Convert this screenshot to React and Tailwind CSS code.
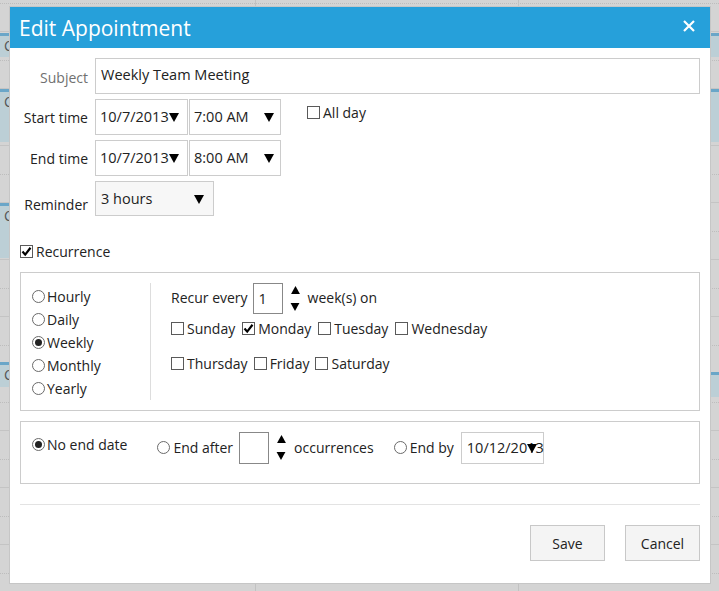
import React from "react";

const solidLines = [31, 88, 145, 202, 259, 316, 373, 430, 487, 544];
const dottedLines = [3, 60, 117, 174, 231, 288, 345, 402, 459, 516, 573];
const leftBlocks = [
  [33, 24],
  [89, 53],
  [203, 55],
  [362, 25],
];
const rightBlocks = [
  [33, 24],
  [89, 53],
  [372, 25],
];

function Tri({ up, w = 10, h = 9 }) {
  return (
    <svg width={w} height={h} viewBox="0 0 10 9" className="block shrink-0">
      <path d={up ? "M5 0L10 9H0Z" : "M0 0H10L5 9Z"} fill="#000" />
    </svg>
  );
}

function Check({ checked }) {
  return (
    <span className="relative inline-block w-[13px] h-[13px] border border-[#5a5a5a] bg-white shrink-0">
      {checked && (
        <svg width="13" height="13" viewBox="0 0 13 13" className="absolute left-[-1px] top-[-1px]">
          <path d="M2.5 6.5L5.2 9.6L10.5 2.8" stroke="#000" strokeWidth="2.2" fill="none" />
        </svg>
      )}
    </span>
  );
}

function Radio({ checked }) {
  return (
    <span className="inline-flex items-center justify-center w-[13px] h-[13px] rounded-full border border-[#6a6a6a] bg-white shrink-0">
      {checked && <span className="w-[7px] h-[7px] rounded-full bg-[#222]" />}
    </span>
  );
}

function CheckItem({ checked, label }) {
  return (
    <span className="inline-flex items-center gap-[3px]">
      <Check checked={checked} />
      <span>{label}</span>
    </span>
  );
}

function RadioItem({ checked, label }) {
  return (
    <span className="inline-flex items-center gap-[2px] h-[23px]">
      <Radio checked={checked} />
      <span>{label}</span>
    </span>
  );
}

function Spinner() {
  return (
    <span className="flex flex-col justify-between h-[27px] py-[1px]">
      <Tri up w={11} h={8} />
      <Tri w={10} h={8} />
    </span>
  );
}

export default function App() {
  return (
    <div
      className="relative w-[719px] h-[591px] overflow-hidden bg-[#d4d4d4] text-[14px] text-[#222]"
      style={{ fontFamily: '"Open Sans", "Noto Sans", sans-serif' }}
    >
      {/* scheduler background */}
      {solidLines.map((y) => (
        <div key={"s" + y} className="absolute left-0 right-0 h-px bg-[#c4c4c4]" style={{ top: y }} />
      ))}
      {dottedLines.map((y) => (
        <div key={"d" + y} className="absolute left-0 right-0 h-0 border-t border-dotted border-[#bdbdbd]" style={{ top: y }} />
      ))}
      <div className="absolute top-0 bottom-0 left-[255px] w-px bg-[#c2c2c2]" />
      <div className="absolute top-0 bottom-0 left-[518px] w-px bg-[#c2c2c2]" />
      {leftBlocks.map(([t, h]) => (
        <div
          key={"l" + t}
          className="absolute left-0 w-[10px] whitespace-nowrap bg-[#bccfd6] border-t-[3px] border-[#6aa6c8] text-[#555] pl-[4px] leading-[20px]"
          style={{ top: t, height: h }}
        >
          C
        </div>
      ))}
      {rightBlocks.map(([t, h]) => (
        <div
          key={"r" + t}
          className="absolute left-[700px] w-[19px] bg-[#bccfd6] border-t-[3px] border-[#6aa6c8]"
          style={{ top: t, height: h }}
        />
      ))}

      {/* dialog */}
      <div className="absolute left-[10px] top-[7px] w-[700px] h-[576px] bg-white ring-1 ring-[#c6c6c6] flex flex-col">
        <div className="h-[41px] bg-[#26a0da] flex items-center justify-between pl-[9px] pr-[15px] text-white">
          <span className="text-[21px] leading-none mt-[1px]">Edit Appointment</span>
          <svg width="12" height="12" viewBox="0 0 12 12" className="mb-[3px]">
            <path d="M1 1L11 11M11 1L1 11" stroke="#fff" strokeWidth="2.2" />
          </svg>
        </div>

        <div className="flex flex-col px-[10px]">
          {/* Subject */}
          <div className="flex items-center mt-[10px] h-[36px]">
            <span className="w-[68px] text-right text-[#707070] leading-[40px] h-[36px]">Subject</span>
            <div className="ml-[7px] flex-1 h-[36px] border border-[#cccccc] flex items-center pl-[5px] pb-[3px] text-[14.5px]">
              Weekly Team Meeting
            </div>
          </div>

          {/* Start time */}
          <div className="flex items-start mt-[5px] h-[36px]">
            <span className="w-[68px] text-right leading-[38px] h-[36px]">Start time</span>
            <div className="ml-[7px] w-[93px] h-[36px] border border-[#cccccc] flex items-center pl-[4px] text-[14.5px]">
              <span>10/7/2013</span>
              <Tri />
            </div>
            <div className="ml-[1px] w-[92px] h-[36px] border border-[#cccccc] flex items-center justify-between pl-[4px] pr-[6px] text-[14.5px]">
              <span>7:00 AM</span>
              <Tri />
            </div>
            <span className="ml-[26px] mt-[3px]">
              <CheckItem label="All day" />
            </span>
          </div>

          {/* End time */}
          <div className="flex items-start mt-[5px] h-[36px]">
            <span className="w-[68px] text-right leading-[38px] h-[36px]">End time</span>
            <div className="ml-[7px] w-[93px] h-[36px] border border-[#cccccc] flex items-center pl-[4px] text-[14.5px]">
              <span>10/7/2013</span>
              <Tri />
            </div>
            <div className="ml-[1px] w-[92px] h-[36px] border border-[#cccccc] flex items-center justify-between pl-[4px] pr-[6px] text-[14.5px]">
              <span>8:00 AM</span>
              <Tri />
            </div>
          </div>

          {/* Reminder */}
          <div className="flex items-start mt-[5px] h-[35px]">
            <span className="w-[68px] text-right leading-[20px] mt-[14px]">Reminder</span>
            <div className="ml-[7px] w-[119px] h-[35px] border border-[#cccccc] bg-[#f7f7f7] flex items-start justify-between pt-[6px] pl-[5px] pr-[9px] text-[14.5px]">
              <span>3 hours</span>
              <span className="mt-[7px]">
                <Tri />
              </span>
            </div>
          </div>

          {/* Recurrence checkbox */}
          <div className="mt-[25px] h-[20px] flex items-center gap-[3px]">
            <Check checked />
            <span>Recurrence</span>
          </div>

          {/* Recurrence box */}
          <div className="mt-[11px] h-[139px] border border-[#cccccc] flex">
            <div className="w-[130px] my-[10px] border-r border-[#dddddd] flex flex-col pl-[11px] pt-[2px]">
              <RadioItem label="Hourly" />
              <RadioItem label="Daily" />
              <RadioItem checked label="Weekly" />
              <RadioItem label="Monthly" />
              <RadioItem label="Yearly" />
            </div>
            <div className="flex flex-col pl-[20px] pt-[10px]">
              <div className="flex items-center h-[31px]">
                <span className="mb-[2px]">Recur every</span>
                <div className="ml-[5px] w-[30px] h-[31px] border border-[#888] flex items-center pl-[5px] text-[14.5px]">1</div>
                <span className="ml-[7px]">
                  <Spinner />
                </span>
                <span className="ml-[7px] mb-[2px]">week(s) on</span>
              </div>
              <div className="flex items-center gap-[7px] h-[28px]">
                <CheckItem label="Sunday" />
                <CheckItem checked label="Monday" />
                <CheckItem label="Tuesday" />
                <CheckItem label="Wednesday" />
              </div>
              <div className="flex items-center gap-[6px] h-[28px] mt-[7px]">
                <CheckItem label="Thursday" />
                <CheckItem label="Friday" />
                <CheckItem label="Saturday" />
              </div>
            </div>
          </div>

          {/* End box */}
          <div className="mt-[10px] h-[63px] border border-[#cccccc] flex items-start pl-[11px] pt-[10px]">
            <span className="inline-flex items-center gap-[2px] h-[24px]">
              <Radio checked />
              <span>No end date</span>
            </span>
            <span className="ml-[30px] inline-flex items-center gap-[3px] h-[31px]">
              <Radio />
              <span>End after</span>
            </span>
            <div className="ml-[6px] w-[30px] h-[32px] border border-[#888]" />
            <span className="ml-[7px] h-[31px] flex items-center">
              <Spinner />
            </span>
            <span className="ml-[7px] h-[31px] flex items-center mb-[2px]">occurrences</span>
            <span className="ml-[20px] inline-flex items-center gap-[3px] h-[31px]">
              <Radio />
              <span>End by</span>
            </span>
            <div className="relative ml-[7px] w-[83px] h-[32px] border border-[#cccccc] flex items-center pl-[5px] text-[14.5px]">
              <span>10/12/2013</span>
              <span className="absolute left-[65px] top-[11px]">
                <Tri />
              </span>
            </div>
          </div>

          {/* separator */}
          <div className="mt-[20px] h-px bg-[#e3e3e3]" />

          {/* Buttons */}
          <div className="mt-[20px] flex justify-end gap-[20px]">
            <button className="w-[75px] h-[36px] border border-[#c8c8c8] bg-[#f4f4f4] text-[#222]">Save</button>
            <button className="w-[75px] h-[36px] border border-[#c8c8c8] bg-[#f4f4f4] text-[#222]">Cancel</button>
          </div>
        </div>
      </div>
    </div>
  );
}
